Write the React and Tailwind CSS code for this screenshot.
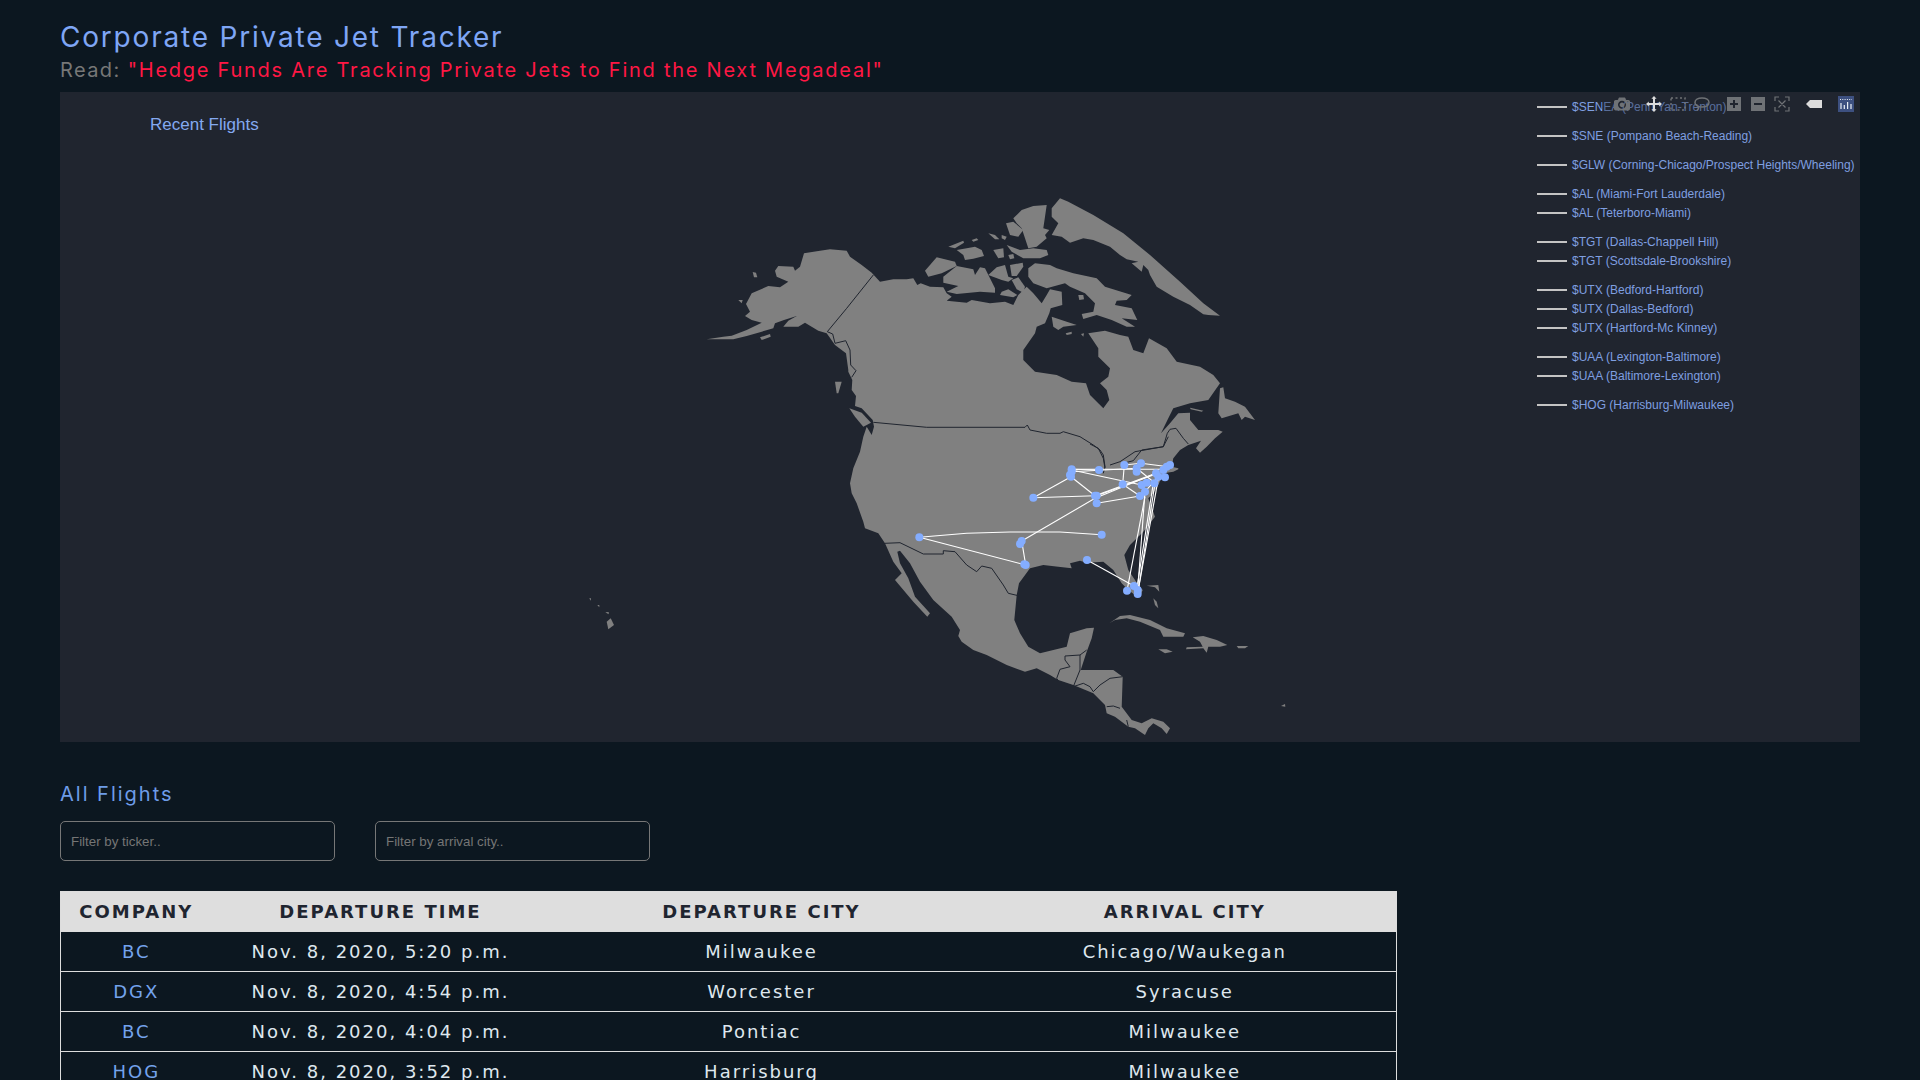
import React from "react";

// map outlines are traced from crops, so each run of points keeps the crop's own origin
const pts = (ox, oy, str) =>
  str
    .trim()
    .split(/\s+/)
    .map((p) => {
      const [x, y] = p.split(",").map(Number);
      return `${(ox + x / 3).toFixed(1)},${(oy + y / 3).toFixed(1)}`;
    })
    .join(" ");

const A = (s) => pts(680, 180, s);
const B = (s) => pts(1000, 180, s);
const C = (s) => pts(820, 430, s);
const D = (s) => pts(820, 370, s);
const E = (s) => pts(1090, 370, s);
const H = (s) => pts(570, 580, s);

const mainland = [
  A("80,478 130,470 155,467 200,450 245,428 215,420 195,408 210,395 198,372 215,340 265,318 300,322 325,305 290,290 285,272 295,258 340,260 345,272 360,260 372,220 420,212 450,208 500,212 510,230 545,255 575,278 600,305 640,298 680,298 700,295 712,315 722,310 750,320 790,322 800,340 815,350 800,362 860,368 875,360 930,370 975,365 1000,375 1015,345 1040,320 1060,340 1085,370 1100,345 1110,328 1145,335 1147,375 1112,385 1108,400 1095,430 1070,440"),
  B("105,460 70,510 70,540 105,575 170,585 215,605 258,610 270,645 310,685 328,660 320,630 300,610 325,590 330,565 295,530 295,505 265,460 315,452 360,465 385,470 400,510 430,520 447,475 500,505 530,545 600,560 640,585 660,610"),
  E("355,90 300,100 250,115 235,145 213,190 240,160 265,130 300,128 300,150 325,180 385,180 398,185 375,205 350,230 330,248 318,235 333,212 295,225 270,240 250,265 245,290 265,295"),
  C("1075,118 1060,125 1030,130 1015,165 1000,190 985,205 1005,260 970,305 930,345 913,375 925,420 955,465 968,480 960,500 945,495 925,480 905,460 880,420 850,395 800,398 780,392 750,400 755,415 715,410 670,405 630,415 597,460 590,495 583,570 600,610 625,650 660,670 740,650 750,610 800,595 822,593 815,625 800,665 782,720 830,720 880,720 908,740 905,830 935,870 965,880 995,865 1030,875 1050,895 1040,912 1025,895 1000,880 985,895 975,915 945,895 925,890 885,860 860,850 855,825 820,790 760,765 715,750 690,735 650,715 615,725 560,705 500,675 460,660 425,635 415,618 420,600 395,560 340,510 300,455 270,400 240,362 232,365 240,400 265,445 285,500 330,550 322,560 280,515 225,450 245,430 220,395 195,340"),
  D("175,490 135,475 130,455 110,400 95,370 90,340 100,295 120,245 130,200 140,170 155,195 162,170 158,150 125,115 105,108 108,78 95,60 97,30 85,5"),
  A("505,570 498,520 465,495 440,460 415,452 375,428 355,440 335,440 310,440 325,422 350,408 312,420 285,430 280,445 245,455 200,468 160,478"),
].join(" ");

const islands = [
  // alaska and the pacific side
  A("465,605 485,605 475,640 470,640"),
  A("240,472 270,462 272,470 245,480"),
  A("175,360 188,360 185,370"),
  A("218,276 228,278 232,292 222,292"),
  D("88,115 125,128 153,158 130,170 105,140"),
  // arctic
  A("735,272 770,232 825,245 830,258 785,280 745,290"),
  A("790,290 830,258 880,268 885,285 900,262 915,265 945,325 945,338 900,335 830,342 800,335 835,318 790,308"),
  A("925,285 950,262 975,255 985,290 1000,295 985,305 965,300"),
  A("990,255 1028,248 1030,260 1010,288 995,288"),
  A("995,300 1015,292 1035,320 1030,338 1010,328"),
  A("965,335 985,328 1012,345 1000,352 960,345"),
  A("805,200 850,182 852,188 825,205"),
  A("875,180 890,175 895,180 880,185"),
  A("830,210 860,205 885,200 905,210 912,228 880,236 855,240 850,225"),
  A("925,160 945,165 958,178 945,178"),
  A("965,165 980,170 975,180 965,175"),
  A("940,210 970,205 972,232 955,235"),
  A("985,225 1000,222 1003,235 990,238"),
  B("65,90 100,78 140,75 135,110 130,145 148,150 135,165 140,175 110,200 85,205 75,175 65,145 50,130 40,115"),
  B("18,130 40,125 70,150 55,170 30,165"),
  B("20,195 60,210 100,205 140,210 145,225 120,235 70,235 35,215"),
  B("85,265 105,250 150,255 170,265 220,280 290,295 315,320 395,345 380,360 350,362 345,375 395,385 412,420 365,415 405,440 380,440 335,420 290,405 250,417 245,402 280,395 285,370 255,340 210,320 195,310 140,325 100,310 85,290"),
  B("155,410 200,425 230,435 190,440 175,450 160,440"),
  B("197,460 215,455 215,462 200,465"),
  B("243,462 252,460 250,470"),
  B("235,345 250,345 252,358 238,360"),
  // greenland
  B("180,55 205,65 280,105 370,160 450,225 540,305 610,370 660,407 625,405 610,403 570,375 520,350 470,320 450,285 445,270 430,255 425,275 395,250 415,245 380,238 360,225 330,200 280,180 250,175 210,188 185,170 155,165 175,130 155,110 155,85"),
  // gulf of st lawrence and newfoundland
  E("390,55 400,52 405,85 435,95 465,110 495,150 465,140 455,150 445,130 395,145 385,130"),
  E("300,113 340,122 335,125 302,118"),
  E("325,180 345,185 360,185 345,190"),
  // caribbean
  C("868,580 900,558 930,555 990,570 1040,595 1095,610 1090,620 1030,620 1020,600 960,575 920,565 885,570"),
  C("1118,622 1150,618 1190,630 1222,645 1200,650 1165,650 1160,668 1150,655 1098,658 1100,652 1148,650 1140,635"),
  C("1015,658 1040,658 1058,665 1035,670"),
  C("1250,648 1285,648 1275,655 1255,655"),
  C("1000,505 1010,515 1015,535 1005,525"),
  C("980,467 1015,465 1018,485 1005,472"),
  pts(1280, 700, "3,18 15,12 16,20"),
  // hawaii
  H("110,125 122,115 132,135 115,148"),
  H("106,97 116,96 116,103"),
  H("82,75 88,75 88,82"),
  H("58,55 63,55 62,62"),
];

const borders = [
  A("580,285 500,385 442,455 458,462 465,490 497,482 510,510 512,555 528,572 515,592"),
  A("580,727 740,742 1035,742 1042,735 1050,750 1100,760 1140,760 1150,755 1200,770 1240,795 1260,810"),
  C("840,60 850,75 855,110 850,130"),
  C("870,105 900,95 945,65 1030,50 1045,20"),
  E("0,222 25,235 40,265 45,295"),
  E("100,280 130,272 155,240 220,230 232,190 240,178 258,175 280,205 295,222"),
  C("195,340 240,338 310,372 370,372 370,362 405,365 440,405 470,425 485,408 515,415 550,465 565,490 595,497"),
  C("800,660 780,675 735,678 735,690 750,710 720,718 710,745 720,760"),
  C("780,675 780,720 760,770 790,760 810,770 820,785 840,765 870,745 908,740"),
  C("860,830 880,828 900,835"),
  C("920,870 925,890"),
];

const routes = [
  "298,322 617,405",
  "298,322 440,310 570,306 720,306 845,314",
  "605,333 617,405",
  "605,333 825,205 1008,130",
  "640,203 753,140",
  "640,203 825,197",
  "753,140 825,197",
  "755,118 837,120",
  "755,120 965,165",
  "755,125 950,115",
  "830,220 960,198",
  "825,197 1008,130",
  "830,197 1000,135",
  "908,163 960,198",
  "913,105 908,163",
  "913,105 963,100 1045,110",
  "950,115 1000,155",
  "975,185 1015,140",
  "953,480 975,185",
  "921,482 975,200",
  "953,492 1005,160",
  "955,480 1015,145",
  "950,478 1000,160",
  "801,390 942,468",
  "755,118 1030,118",
];

const markers = [
  "298,322", "617,405", "613,403", "605,333", "600,342", "845,314", "640,203", "753,140", "750,135",
  "755,118", "755,125", "837,120", "825,197", "830,197", "830,220", "908,163", "913,105", "950,115",
  "950,125", "963,100", "1030,120", "1040,110", "1050,105", "1008,130", "1015,140", "1035,142", "1003,160",
  "965,165", "980,158", "975,185", "960,198", "801,390", "942,468", "921,482", "953,480", "953,492",
];

const legend = [
  ["$SENEA (Penn Yan-Trenton)"],
  ["$SNE (Pompano Beach-Reading)"],
  ["$GLW (Corning-Chicago/Prospect Heights/Wheeling)"],
  ["$AL (Miami-Fort Lauderdale)", "$AL (Teterboro-Miami)"],
  ["$TGT (Dallas-Chappell Hill)", "$TGT (Scottsdale-Brookshire)"],
  ["$UTX (Bedford-Hartford)", "$UTX (Dallas-Bedford)", "$UTX (Hartford-Mc Kinney)"],
  ["$UAA (Lexington-Baltimore)", "$UAA (Baltimore-Lexington)"],
  ["$HOG (Harrisburg-Milwaukee)"],
];

const flights = [
  ["BC", "Nov. 8, 2020, 5:20 p.m.", "Milwaukee", "Chicago/Waukegan"],
  ["DGX", "Nov. 8, 2020, 4:54 p.m.", "Worcester", "Syracuse"],
  ["BC", "Nov. 8, 2020, 4:04 p.m.", "Pontiac", "Milwaukee"],
  ["HOG", "Nov. 8, 2020, 3:52 p.m.", "Harrisburg", "Milwaukee"],
];

function Mode({ children, active }) {
  return (
    <div className="w-6 h-[22px] flex items-center justify-center">
      <svg width="16" height="16" viewBox="0 0 16 16" className={active ? "bg-[#3d5080]" : ""}>
        {children}
      </svg>
    </div>
  );
}

function ModeBar() {
  const dim = "#6f7276";
  const on = "#dcdcdc";
  return (
    <div className="absolute right-[2px] top-px flex bg-[#20252f]/40">
      <div className="flex pl-2">
        <Mode>
          <g transform="translate(0 13.6) scale(.016 -.016)">
            <path
              fill={dim}
              fillRule="evenodd"
              d="m500 450c-83 0-150-67-150-150 0-83 67-150 150-150 83 0 150 67 150 150 0 83-67 150-150 150z m400 150h-120c-16 0-34 13-39 29l-31 93c-6 15-23 28-40 28h-340c-16 0-34-13-39-28l-31-94c-6-15-23-28-40-28h-120c-55 0-100-45-100-100v-450c0-55 45-100 100-100h800c55 0 100 45 100 100v450c0 55-45 100-100 100z m-400-550c-138 0-250 112-250 250 0 138 112 250 250 250 138 0 250-112 250-250 0-138-112-250-250-250z m365 380c-19 0-35 16-35 35 0 19 16 35 35 35 19 0 35-16 35-35 0-19-16-35-35-35z"
            />
          </g>
        </Mode>
      </div>
      <div className="flex pl-2">
        <Mode>
          <path
            fill={on}
            d="M8 0l2.6 2.8H9v4.2h4.2V5.400L16 8l-2.800 2.600V9H9v4.200h1.600L8 16l-2.600-2.800H7V9H2.800v1.600L0 8l2.800-2.600V7H7V2.800H5.400z"
          />
        </Mode>
        <Mode>
          <rect x="1" y="2" width="14" height="12" fill="none" stroke={dim} strokeWidth="1.500" strokeDasharray="2 2.500" />
        </Mode>
        <Mode>
          <path
            fill="none"
            stroke={dim}
            strokeWidth="1.500"
            d="M8 2c4 0 7 1.800 7 4.500S12 11 8 11c-1 0-2 .0-3-.4C3 10 1 8.500 1 6.500 1 3.800 4 2 8 2zM4.500 10.500c.5 1.500-.5 3-1.500 4"
          />
        </Mode>
      </div>
      <div className="flex pl-2">
        <Mode>
          <path fill={dim} fillRule="evenodd" d="M1 1h14v14H1z M7 4v3H4v2h3v3h2V9h3V7H9V4z" />
        </Mode>
        <Mode>
          <path fill={dim} fillRule="evenodd" d="M1 1h14v14H1z M4 7v2h8V7z" />
        </Mode>
        <Mode>
          <path
            fill="none"
            stroke={dim}
            strokeWidth="1.200"
            d="M1 5V1h4M11 1h4v4M15 11v4h-4M5 15H1v-4M4.500 4.500l7 7M11.500 4.500l-7 7"
          />
        </Mode>
      </div>
      <div className="flex pl-2">
        <Mode>
          <path fill={on} d="M0 8l4-4h12v8H4z" />
        </Mode>
      </div>
      <div className="flex pl-2">
        <Mode active>
          <path
            fill="none"
            stroke="#e8edf5"
            strokeWidth="1.200"
            d="M3 7v6M6.300 9v4M9.600 6v7M13 8v5"
          />
          <path fill="none" stroke="#e8edf5" strokeWidth="1" strokeDasharray="1 1.300" d="M2 3.500h12" />
        </Mode>
      </div>
    </div>
  );
}

function FlightMap() {
  return (
    <svg viewBox="60 92 1800 650" width="1800" height="650" className="block">
      <polygon points={mainland} fill="#808080" />
      {islands.map((p, i) => (
        <polygon key={i} points={p} fill="#808080" />
      ))}
      {borders.map((p, i) => (
        <polyline key={i} points={p} fill="none" stroke="#20252f" strokeWidth="1" />
      ))}
      {routes.map((p, i) => (
        <polyline key={i} points={C(p)} fill="none" stroke="#ffffff" strokeWidth="1.100" />
      ))}
      {markers.map((p, i) => {
        const [x, y] = p.split(",").map(Number);
        return <circle key={i} cx={820 + x / 3} cy={430 + y / 3} r="4" fill="#84adff" />;
      })}
    </svg>
  );
}

export default function App() {
  return (
    <div className="min-h-screen bg-[#0c1720] px-[60px] pt-[20px] font-['Inter',sans-serif]">
      <h1 className="text-[28px] leading-[34px] tracking-[1.8px] text-[#7fa6f5]">Corporate Private Jet Tracker</h1>
      <p className="text-[20px] leading-[24px] mt-[4px] tracking-[1.4px] text-[#777777]">
        Read: <span className="tracking-[1.75px] text-[#ff1744]">"Hedge Funds Are Tracking Private Jets to Find the Next Megadeal"</span>
      </p>

      <div className="relative mt-[10px] w-[1800px] h-[650px] bg-[#20252f] overflow-hidden">
        <FlightMap />
        <div className="absolute left-[90px] top-[22px] text-[17px] leading-[22px] text-[#84a9f0] font-['Liberation_Sans',sans-serif]">
          Recent Flights
        </div>
        <div className="absolute left-[1477px] top-[5px] flex flex-col gap-[10px] font-['Liberation_Sans',sans-serif]">
          {legend.map((group, i) => (
            <div key={i} className="flex flex-col">
              {group.map((name) => (
                <div key={name} className="h-[19px] flex items-center text-[12px] text-[#7f9fe0]">
                  <span className="w-[30px] h-[2px] bg-[#c4c4c4] mr-[5px]"></span>
                  {name}
                </div>
              ))}
            </div>
          ))}
        </div>
        <ModeBar />
      </div>

      <h2 className="mt-[40px] text-[20px] leading-[24px] tracking-[2px] text-[#6e9ce8]">All Flights</h2>

      <div className="flex gap-[40px] mt-[15px]">
        <input
          placeholder="Filter by ticker.."
          className="w-[275px] h-[40px] px-[10px] bg-transparent border border-[#777777] rounded-[5px] text-[13.333px] font-['Liberation_Sans',sans-serif] placeholder:text-[#757575] outline-none"
        />
        <input
          placeholder="Filter by arrival city.."
          className="w-[275px] h-[40px] px-[10px] bg-transparent border border-[#777777] rounded-[5px] text-[13.333px] font-['Liberation_Sans',sans-serif] placeholder:text-[#757575] outline-none"
        />
      </div>

      <table className="mt-[30px] w-[1337px] table-fixed border-collapse border border-[#dddddd] font-['DejaVu_Sans',sans-serif] text-[18px] tracking-[2px]">
        <thead className="bg-[#dedede] text-[#1f2530]">
          <tr className="h-[40px]">
            <th className="w-[151px] font-bold">COMPANY</th>
            <th className="w-[338px] font-bold">DEPARTURE TIME</th>
            <th className="w-[424px] font-bold">DEPARTURE CITY</th>
            <th className="font-bold">ARRIVAL CITY</th>
          </tr>
        </thead>
        <tbody className="text-[#dfe7ee] text-center">
          {flights.map((f, i) => (
            <tr key={i} className="h-[40px] border-b border-[#dddddd]">
              <td className="text-[#74a3ec]">{f[0]}</td>
              <td>{f[1]}</td>
              <td>{f[2]}</td>
              <td>{f[3]}</td>
            </tr>
          ))}
        </tbody>
      </table>
    </div>
  );
}
